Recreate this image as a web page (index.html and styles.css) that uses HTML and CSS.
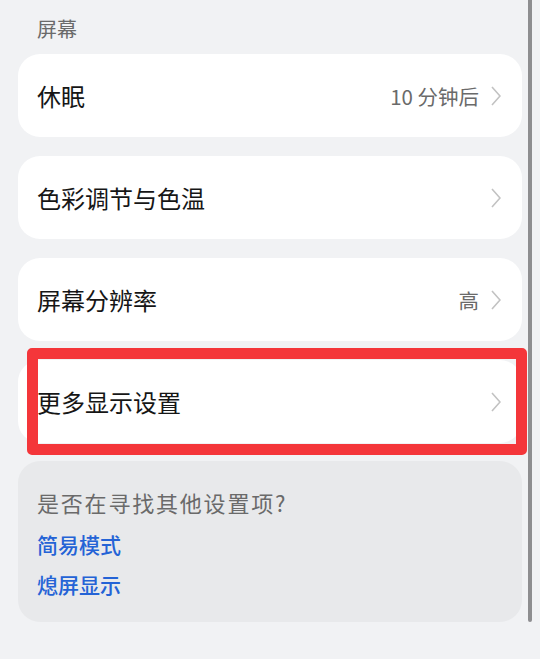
FILE: index.html
```html
<!DOCTYPE html>
<html lang="zh-CN">
<head>
  <meta charset="UTF-8" />
  <meta name="viewport" content="width=device-width, initial-scale=1.0"/>
  <title>显示设置</title>
  <link rel="stylesheet" href="styles.css">
</head>
<body>
  <div class="page">
    <div class="section-title">屏幕</div>

    <div class="item">
      <span class="label">休眠</span>
      <span class="value">10 分钟后</span>
      <svg class="chevron" viewBox="0 0 10 20"><polyline points="1,1 9,10 1,19"/></svg>
    </div>

    <div class="item">
      <span class="label">色彩调节与色温</span>
      <svg class="chevron" viewBox="0 0 10 20"><polyline points="1,1 9,10 1,19"/></svg>
    </div>

    <div class="item">
      <span class="label">屏幕分辨率</span>
      <span class="value">高</span>
      <svg class="chevron" viewBox="0 0 10 20"><polyline points="1,1 9,10 1,19"/></svg>
    </div>

    <div class="item marked">
      <span class="label">更多显示设置</span>
      <svg class="chevron" viewBox="0 0 10 20"><polyline points="1,1 9,10 1,19"/></svg>
      <!-- annotation box -->
      <div class="highlight"></div>
    </div>

    <div class="hint">
      <div class="hint-title">是否在寻找其他设置项?</div>
      <a class="hint-link" href="#">简易模式</a>
      <a class="hint-link" href="#">熄屏显示</a>
    </div>
  </div>

  <div class="scrollbar"></div>
</body>
</html>
```

FILE: styles.css
```css
:root {
  --bg: #f1f2f4;
  --card: #ffffff;
  --card-muted: #e8e9eb;
  --text: #161616;
  --sub: #6a6a6a;
  --blue: #2463d6;
  --red: #f4363a;
}
* {
  box-sizing: border-box;
}
body {
  margin: 0;
  background: var(--bg);
  font-family: "Noto Sans CJK SC", "Noto Sans", sans-serif;
  color: var(--text);
  overflow: hidden;
}
.page {
  padding: 0 18px;
  width: 540px;
}
.section-title {
  height: 54px;
  padding: 3px 0 0 19px;
  display: flex;
  align-items: center;
  font-size: 20px;
  color: var(--sub);
}
.item {
  position: relative;
  height: 83px;
  margin-bottom: 19px;
  padding: 0 21px 0 19px;
  display: flex;
  align-items: center;
  background: var(--card);
  border-radius: 22px;
}
.item.marked {
  margin-bottom: 18px;
}
.label {
  flex: 1;
  font-size: 24px;
  margin-top: -1px;
}
.value {
  font-size: 20.5px;
  color: var(--sub);
  margin-right: 12px;
}
.chevron {
  width: 10px;
  height: 20px;
  fill: none;
  stroke: #c2c2c2;
  stroke-width: 1.6;
}
.highlight {
  position: absolute;
  left: 9px;
  right: -5px;
  top: -12px;
  bottom: -12px;
  border: 11px solid var(--red);
  border-radius: 5px;
}
.hint {
  background: var(--card-muted);
  border-radius: 22px;
  padding: 26px 19px 21px;
  display: flex;
  flex-direction: column;
  height: 161px;
}
.hint-title {
  font-size: 22px;
  line-height: 30px;
  letter-spacing: 1.8px;
  color: var(--sub);
  margin-bottom: 12px;
}
.hint-link {
  font-size: 21px;
  line-height: 30px;
  font-weight: 500;
  color: var(--blue);
  text-decoration: none;
}
.hint-link + .hint-link {
  margin-top: 10px;
}
.scrollbar {
  position: fixed;
  top: 0;
  left: 528px;
  width: 4px;
  height: 622px;
  background: #8e8e90;
  border-radius: 0 0 2px 2px;
}
```
